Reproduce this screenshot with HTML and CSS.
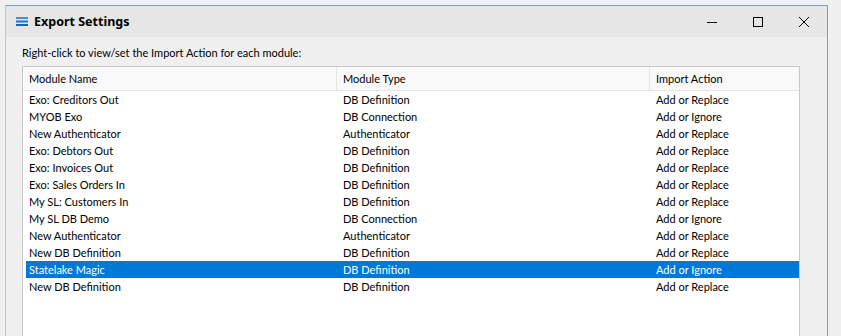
FILE: index.html
```html
<!DOCTYPE html>
<html lang="en">
<head>
    <meta charset="UTF-8">
    <title>Export Settings</title>
    <link rel="stylesheet" href="styles.css">
</head>
<body>
    <div class="window">
        <div class="titlebar">
            <svg class="app-icon" width="12" height="9" viewBox="0 0 12 9">
                <rect x="0" y="0" width="12" height="2" fill="#3d8fe0"/>
                <rect x="0" y="3.5" width="12" height="2" fill="#1f74c9"/>
                <rect x="0" y="7" width="12" height="2" fill="#1763b3"/>
            </svg>
            <div class="title">Export Settings</div>
            <div class="controls">
                <div class="ctl">
                    <svg width="10" height="10" viewBox="0 0 10 10"><path d="M0 5.5h10" stroke="#000" stroke-width="1"/></svg>
                </div>
                <div class="ctl">
                    <svg width="10" height="10" viewBox="0 0 10 10"><rect x="0.5" y="0.5" width="9" height="9" fill="none" stroke="#000" stroke-width="1"/></svg>
                </div>
                <div class="ctl">
                    <svg width="10" height="10" viewBox="0 0 10 10"><path d="M0 0L10 10M10 0L0 10" stroke="#000" stroke-width="1"/></svg>
                </div>
            </div>
        </div>

        <div class="content">
            <p class="hint">Right-click to view/set the Import Action for each module:</p>

            <div class="list">
                <div class="row head">
                    <div class="cell">Module Name</div>
                    <div class="cell">Module Type</div>
                    <div class="cell">Import Action</div>
                </div>
                <div class="row"><div class="cell">Exo: Creditors Out</div><div class="cell">DB Definition</div><div class="cell">Add or Replace</div></div>
                <div class="row"><div class="cell">MYOB Exo</div><div class="cell">DB Connection</div><div class="cell">Add or Ignore</div></div>
                <div class="row"><div class="cell">New Authenticator</div><div class="cell">Authenticator</div><div class="cell">Add or Replace</div></div>
                <div class="row"><div class="cell">Exo: Debtors Out</div><div class="cell">DB Definition</div><div class="cell">Add or Replace</div></div>
                <div class="row"><div class="cell">Exo: Invoices Out</div><div class="cell">DB Definition</div><div class="cell">Add or Replace</div></div>
                <div class="row"><div class="cell">Exo: Sales Orders In</div><div class="cell">DB Definition</div><div class="cell">Add or Replace</div></div>
                <div class="row"><div class="cell">My SL: Customers In</div><div class="cell">DB Definition</div><div class="cell">Add or Replace</div></div>
                <div class="row"><div class="cell">My SL DB Demo</div><div class="cell">DB Connection</div><div class="cell">Add or Ignore</div></div>
                <div class="row"><div class="cell">New Authenticator</div><div class="cell">Authenticator</div><div class="cell">Add or Replace</div></div>
                <div class="row"><div class="cell">New DB Definition</div><div class="cell">DB Definition</div><div class="cell">Add or Replace</div></div>
                <div class="row selected"><div class="cell">Statelake Magic</div><div class="cell">DB Definition</div><div class="cell">Add or Ignore</div></div>
                <div class="row"><div class="cell">New DB Definition</div><div class="cell">DB Definition</div><div class="cell">Add or Replace</div></div>
            </div>
        </div>
    </div>
</body>
</html>
```

FILE: styles.css
```css
/* ===== General ===== */
body {
    margin: 0;
    background: #f0f0f0;
    font-family: Lato, "Noto Sans", sans-serif;
    font-size: 11px;
    color: #000;
    overflow: hidden;
}

/* ===== Window ===== */
.window {
    margin: 5px 0 0 5px;
    width: 821px;
    height: 330px;
    border: 1px solid #7f9cc8;
    border-left-color: #c4c4c4;
    border-bottom: none;
    background: #f0f0f0;
}

.titlebar {
    display: flex;
    align-items: center;
    height: 31px;
    background: #e6e6e6;
}

.app-icon {
    margin-left: 10px;
    margin-right: 6px;
}

.title {
    font-family: "Noto Sans", sans-serif;
    font-size: 12.5px;
    font-weight: bold;
    flex: 1;
}

.controls {
    display: flex;
    height: 100%;
}

.ctl {
    width: 46px;
    display: grid;
    place-items: center;
}

/* ===== Content ===== */
.content {
    padding: 8px 0 0 16px;
}

.hint {
    margin: 0 0 5px 0;
    line-height: 16px;
}

/* ===== List view ===== */
.list {
    width: 776px;
    height: 270px;
    border: 1px solid #c8c8c8;
    border-bottom: none;
    background: #fff;
}

.row {
    display: grid;
    grid-template-columns: 310px 313px 1fr;
    height: 17px;
    line-height: 17px;
    margin-left: 3px;
}

.row .cell {
    padding-left: 3px;
    white-space: nowrap;
}

.row .cell + .cell {
    padding-left: 7px;
}

.row.head {
    margin-left: 0;
    height: 23px;
    line-height: 23px;
    background: #f9f9f9;
    border-bottom: 1px solid #e5e5e5;
    grid-template-columns: 313px 313px 1fr;
}

.row.head .cell {
    padding-left: 6px;
}

.row.head .cell + .cell {
    border-left: 1px solid #e5e5e5;
}

.row.selected {
    background: #0078d7;
    color: #fff;
}
```
